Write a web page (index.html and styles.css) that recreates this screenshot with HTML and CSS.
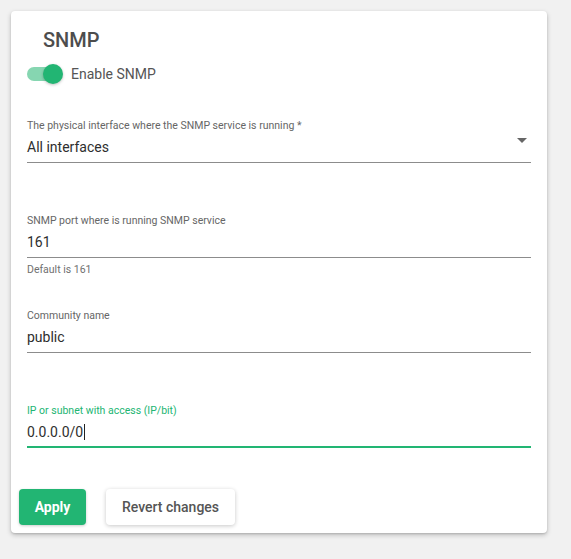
FILE: index.html
```html
<!DOCTYPE html>
<html lang="en">
<head>
    <meta charset="UTF-8">
    <meta name="viewport" content="width=device-width, initial-scale=1.0">
    <title>SNMP</title>
    <link rel="stylesheet" href="styles.css">
</head>
<body>
    <div class="card">
        <h2 class="title">SNMP</h2>
        <div class="toggle-row">
            <span class="switch">
                <span class="switch-track"></span>
                <span class="switch-thumb"></span>
            </span>
            <span class="toggle-label">Enable SNMP</span>
        </div>
        <div class="fields">
            <div class="field">
                <div class="field-label">The physical interface where the SNMP service is running *</div>
                <div class="field-input select">
                    All interfaces
                    <svg class="select-arrow" viewBox="0 0 24 24" width="24" height="24"><path d="M7 10l5 5 5-5z"></path></svg>
                </div>
            </div>
            <div class="field">
                <div class="field-label">SNMP port where is running SNMP service</div>
                <div class="field-input">161</div>
                <div class="field-helper">Default is 161</div>
            </div>
            <div class="field">
                <div class="field-label">Community name</div>
                <div class="field-input">public</div>
            </div>
            <div class="field focused">
                <div class="field-label">IP or subnet with access (IP/bit)</div>
                <div class="field-input">0.0.0.0/0<span class="caret"></span></div>
            </div>
        </div>
        <div class="actions">
            <button class="button button-primary">Apply</button>
            <button class="button button-plain">Revert changes</button>
        </div>
    </div>
</body>
</html>
```

FILE: styles.css
```css
body {
    background-color: #f1f1f1;
    font-family: Roboto, "Liberation Sans", sans-serif;
    margin: 0;
    padding: 11px 24px 25px 11px;
}
.card {
    background-color: #ffffff;
    border-radius: 4px;
    box-shadow: 0 2px 5px rgba(0, 0, 0, 0.22), 0 1px 2px rgba(0, 0, 0, 0.12);
    padding: 12px 16px 8px 16px;
}
.title {
    margin: 0;
    padding-left: 16px;
    font-size: 20px;
    font-weight: 500;
    line-height: 34px;
    color: #4d4d4d;
}
.toggle-row {
    display: flex;
    align-items: center;
    height: 34px;
}
.switch {
    position: relative;
    width: 36px;
    height: 20px;
    margin-right: 8px;
}
.switch-track {
    position: absolute;
    left: 0;
    top: 3px;
    width: 34px;
    height: 14px;
    border-radius: 7px;
    background-color: #86d6b1;
}
.switch-thumb {
    position: absolute;
    left: 16px;
    top: 0;
    width: 20px;
    height: 20px;
    border-radius: 50%;
    background-color: #22b573;
    box-shadow: 0 1px 3px rgba(0, 0, 0, 0.25);
}
.toggle-label {
    font-size: 14px;
    color: #555555;
}
.fields {
    display: grid;
    grid-template-rows: repeat(3, 95px) auto;
    margin-top: 27px;
}
.field-label {
    font-size: 10.5px;
    line-height: 16px;
    color: #666666;
    white-space: nowrap;
}
.field-input {
    position: relative;
    font-size: 14px;
    line-height: 26px;
    color: #2e2e2e;
    padding-bottom: 2px;
    border-bottom: 1px solid #8c8c8c;
}
.select-arrow {
    position: absolute;
    right: -3px;
    top: -6px;
    fill: #666666;
}
.field-helper {
    font-size: 10.5px;
    line-height: 14px;
    color: #707070;
    margin-top: 5px;
}
.focused .field-label {
    color: #22b573;
}
.focused .field-input {
    padding-bottom: 1px;
    border-bottom: 2px solid #22b573;
}
.caret {
    display: inline-block;
    width: 1px;
    height: 16px;
    margin-left: 1px;
    vertical-align: -3px;
    background-color: #222222;
}
.actions {
    display: flex;
    gap: 20px;
    margin: 41px 0 0 -8px;
}
.button {
    height: 36px;
    border: none;
    border-radius: 4px;
    font-family: Roboto, "Liberation Sans", sans-serif;
    font-size: 14px;
    font-weight: 500;
    cursor: pointer;
}
.button-primary {
    width: 67px;
    background-color: #22b573;
    color: #ffffff;
    font-weight: 700;
    box-shadow: 0 1px 3px rgba(0, 0, 0, 0.2);
}
.button-plain {
    width: 129px;
    background-color: #ffffff;
    color: #555555;
    box-shadow: 0 1px 4px rgba(0, 0, 0, 0.22);
}
```
